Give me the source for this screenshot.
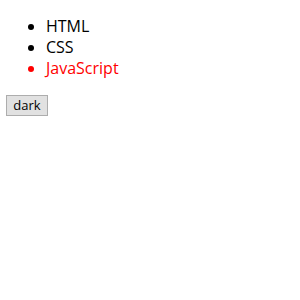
export default function App() {
  const items = ["HTML", "CSS", "JavaScript"];
  return (
    <div className="px-[6px] pt-[16px] text-black font-['Open_Sans',sans-serif]">
      <ul className="list-disc pl-[40px] text-[16px] leading-[21px]">
        {items.map((item, index) => (
          <li key={index} className={index === 2 ? "text-[#ff0000]" : ""}>
            {item}
          </li>
        ))}
      </ul>
      <button className="mt-[16px] h-[21px] w-[42px] border border-[#adadad] bg-[#e1e1e1] text-[13px] leading-[19px] text-black font-['Open_Sans',sans-serif]">
        dark
      </button>
    </div>
  );
}
